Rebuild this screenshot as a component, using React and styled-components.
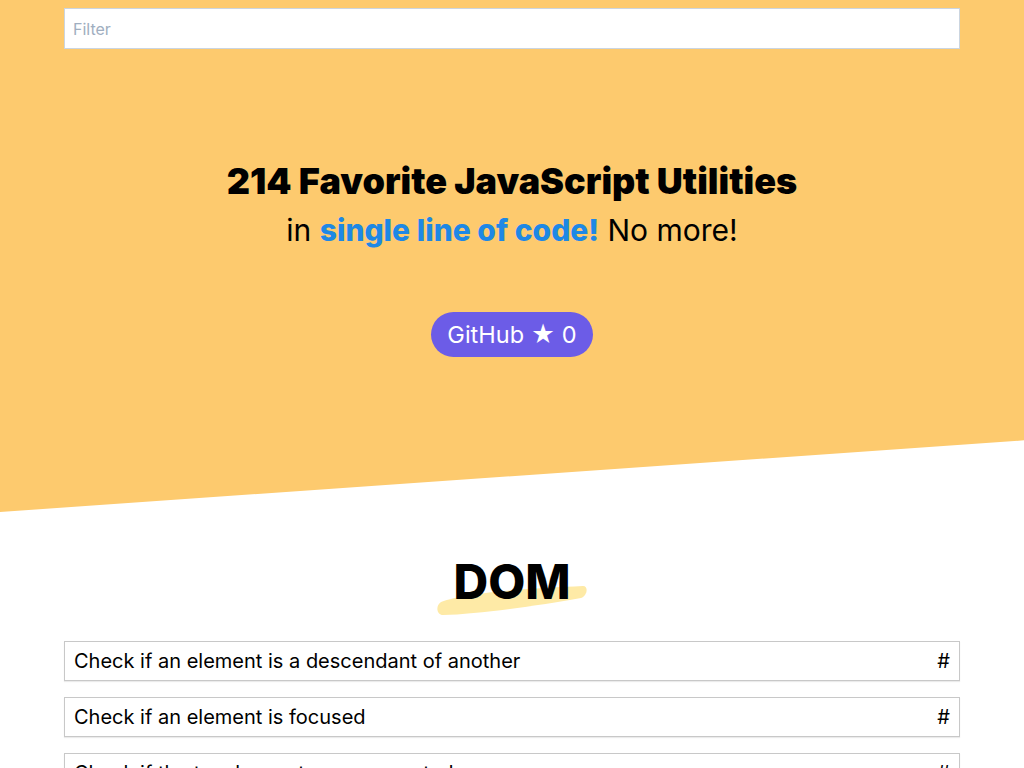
import React from 'react';
import styled, { createGlobalStyle } from 'styled-components';

const GlobalStyle = createGlobalStyle`
  body {
    margin: 0;
    font-family: Inter, "Noto Sans", sans-serif;
    color: #000;
    background: #fff;
  }
  * { box-sizing: border-box; }
`;

const Hero = styled.header`
  background: #fdca6e;
  height: 512px;
  clip-path: polygon(0 0, 100% 0, 100% 86%, 0 100%);
`;

const Container = styled.div`
  width: 896px;
  margin: 0 auto;
`;

const HeroInner = styled(Container)`
  padding-top: 8px;
  display: flex;
  flex-direction: column;
  align-items: center;
`;

const Filter = styled.input`
  width: 100%;
  height: 41px;
  border: 1px solid #cbd5e0;
  padding: 0 8px;
  font-family: inherit;
  font-size: 16px;
  outline: none;
  &::placeholder { color: #a0aec0; }
`;

const Title = styled.h1`
  margin: 110px 0 0;
  font-size: 36px;
  line-height: 45px;
  font-weight: 900;
  text-align: center;
`;

const Subtitle = styled.p`
  margin: 7px 0 0;
  font-size: 30px;
  line-height: 38px;
  text-align: center;
`;

const Accent = styled.span`
  color: #1e88e5;
  font-weight: 800;
`;

const GitHubButton = styled.a`
  margin-top: 63px;
  height: 45px;
  padding: 0 16px;
  display: inline-flex;
  align-items: center;
  border-radius: 9999px;
  background: #6c5ce7;
  color: #fff;
  font-size: 23.5px;
  text-decoration: none;
`;

const Section = styled(Container)`
  padding-top: 40px;
`;

const HeadingWrap = styled.div`
  display: flex;
  justify-content: center;
  margin-bottom: 29px;
`;

const Category = styled.h2`
  position: relative;
  margin: 0;
  font-size: 48px;
  line-height: 60px;
  font-weight: 800;
  z-index: 0;
`;

const Highlight = styled.svg`
  position: absolute;
  left: -16px;
  top: 32px;
  width: 150px;
  height: 32px;
  z-index: -1;
`;

const List = styled.ul`
  list-style: none;
  margin: 0;
  padding: 0;
  display: flex;
  flex-direction: column;
  gap: 16px;
`;

const Item = styled.li`
  height: 40px;
  border: 1px solid #c8c8c8;
  box-shadow: 0 1px 1px rgba(0, 0, 0, 0.08);
  display: flex;
  align-items: center;
  justify-content: space-between;
  padding: 0 9px;
  font-size: 20px;
`;

const Hash = styled.span`
  font-size: 20px;
`;

const items = [
  'Check if an element is a descendant of another',
  'Check if an element is focused',
  'Check if the touch events are supported',
];

export default function App() {
  return (
    <>
      <GlobalStyle />
      <Hero>
        <HeroInner>
          <Filter placeholder="Filter" />
          <Title>214 Favorite JavaScript Utilities</Title>
          <Subtitle>
            in <Accent>single line of code!</Accent> No more!
          </Subtitle>
          <GitHubButton href="#">GitHub ★ 0</GitHubButton>
        </HeroInner>
      </Hero>
      <Section>
        <HeadingWrap>
          <Category>
            DOM
            <Highlight viewBox="0 0 150 32" preserveAspectRatio="none">
              <path d="M4 18 C 30 8, 100 4, 146 2 C 152 2, 150 12, 144 14 C 100 22, 40 30, 6 31 C 0 31, -2 22, 4 18 Z" fill="#feeaa6" />
            </Highlight>
          </Category>
        </HeadingWrap>
        <List>
          {items.map((t) => (
            <Item key={t}>
              <span>{t}</span>
              <Hash>#</Hash>
            </Item>
          ))}
        </List>
      </Section>
    </>
  );
}
